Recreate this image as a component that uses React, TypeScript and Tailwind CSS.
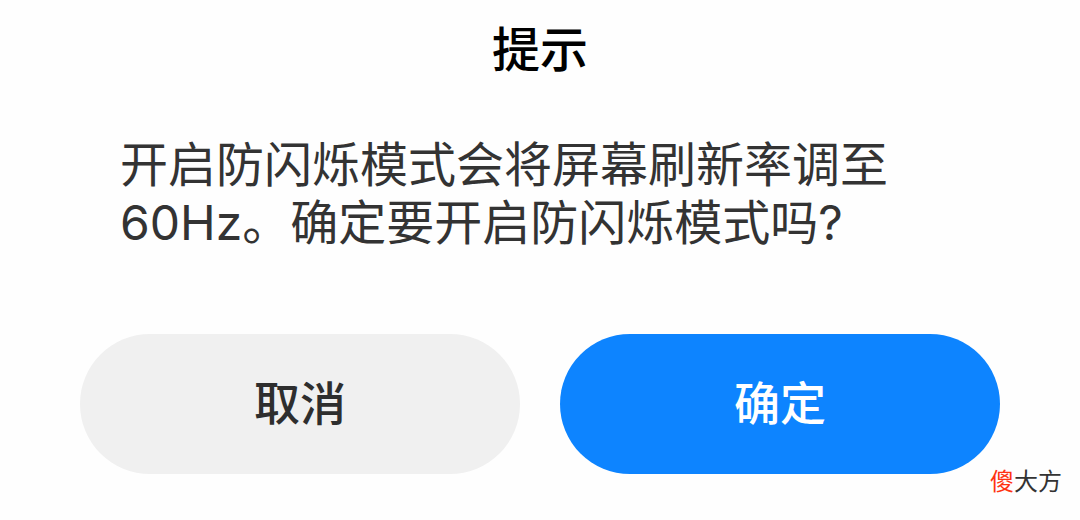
export default function App() {
  return (
    <main
      role="alertdialog"
      aria-labelledby="dialog-title"
      aria-describedby="dialog-message"
      className="relative min-h-screen bg-[#fefefe] px-20 pt-4 pb-12 font-['Noto_Sans_CJK_SC',sans-serif]"
    >
      <h1 id="dialog-title" className="text-center text-[48px] leading-[60px] font-medium text-black">
        提示
      </h1>

      <p
        id="dialog-message"
        className="mt-[60px] px-10 font-[Inter,'Noto_Sans_CJK_SC',sans-serif] text-[48px] leading-[58px] text-[#333333]"
      >
        开启防闪烁模式会将屏幕刷新率调至60Hz。确定要开启防闪烁模式吗?
      </p>

      {/* Actions */}
      <div className="mt-[82px] grid grid-cols-2 gap-10">
        <button
          type="button"
          className="h-[140px] rounded-full bg-[#f0f0f0] pb-2 text-[46px] font-medium text-[#2e2e2e]"
        >
          取消
        </button>
        <button
          type="button"
          className="h-[140px] rounded-full bg-[#0d84ff] pb-2 text-[46px] font-medium text-white"
        >
          确定
        </button>
      </div>

      {/* Site mark */}
      <span className="absolute right-[18px] bottom-6 text-[24px] leading-[36px] text-[#333333]">
        <span className="text-[#ff3311]">傻</span>大方
      </span>
    </main>
  );
}
